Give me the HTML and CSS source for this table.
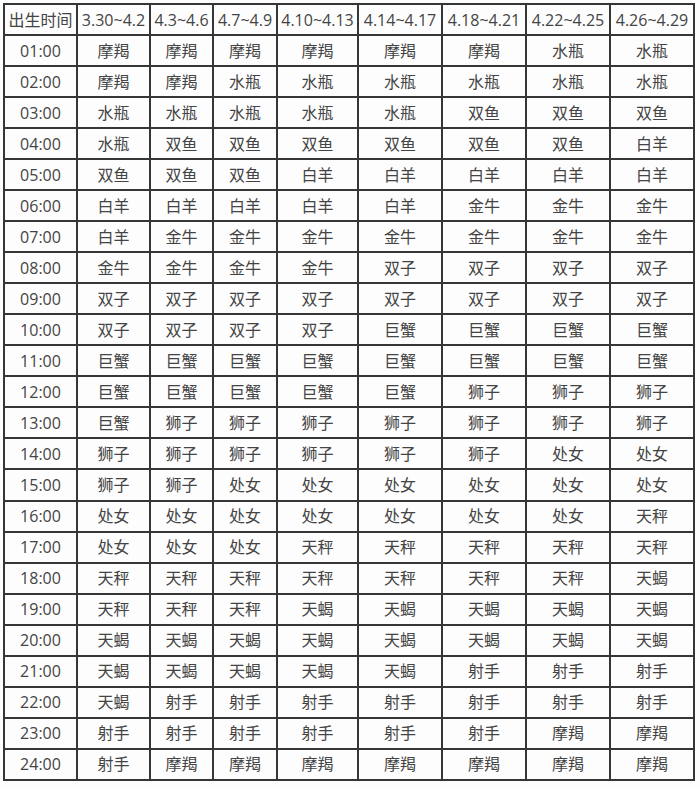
FILE: index.html
```html
<!DOCTYPE html>
<html>
<head>
<meta charset="utf-8">
<link rel="stylesheet" href="styles.css">
</head>
<body>
<table class="chart">
<colgroup>
<col class="c1"><col class="c2"><col class="c3"><col class="c4"><col class="c5"><col class="c6"><col class="c7"><col class="c8"><col class="c9">
</colgroup>
<tr><td>出生时间</td><td>3.30~4.2</td><td>4.3~4.6</td><td>4.7~4.9</td><td>4.10~4.13</td><td>4.14~4.17</td><td>4.18~4.21</td><td>4.22~4.25</td><td>4.26~4.29</td></tr>
<tr><td>01:00</td><td>摩羯</td><td>摩羯</td><td>摩羯</td><td>摩羯</td><td>摩羯</td><td>摩羯</td><td>水瓶</td><td>水瓶</td></tr>
<tr><td>02:00</td><td>摩羯</td><td>摩羯</td><td>水瓶</td><td>水瓶</td><td>水瓶</td><td>水瓶</td><td>水瓶</td><td>水瓶</td></tr>
<tr><td>03:00</td><td>水瓶</td><td>水瓶</td><td>水瓶</td><td>水瓶</td><td>水瓶</td><td>双鱼</td><td>双鱼</td><td>双鱼</td></tr>
<tr><td>04:00</td><td>水瓶</td><td>双鱼</td><td>双鱼</td><td>双鱼</td><td>双鱼</td><td>双鱼</td><td>双鱼</td><td>白羊</td></tr>
<tr><td>05:00</td><td>双鱼</td><td>双鱼</td><td>双鱼</td><td>白羊</td><td>白羊</td><td>白羊</td><td>白羊</td><td>白羊</td></tr>
<tr><td>06:00</td><td>白羊</td><td>白羊</td><td>白羊</td><td>白羊</td><td>白羊</td><td>金牛</td><td>金牛</td><td>金牛</td></tr>
<tr><td>07:00</td><td>白羊</td><td>金牛</td><td>金牛</td><td>金牛</td><td>金牛</td><td>金牛</td><td>金牛</td><td>金牛</td></tr>
<tr><td>08:00</td><td>金牛</td><td>金牛</td><td>金牛</td><td>金牛</td><td>双子</td><td>双子</td><td>双子</td><td>双子</td></tr>
<tr><td>09:00</td><td>双子</td><td>双子</td><td>双子</td><td>双子</td><td>双子</td><td>双子</td><td>双子</td><td>双子</td></tr>
<tr><td>10:00</td><td>双子</td><td>双子</td><td>双子</td><td>双子</td><td>巨蟹</td><td>巨蟹</td><td>巨蟹</td><td>巨蟹</td></tr>
<tr><td>11:00</td><td>巨蟹</td><td>巨蟹</td><td>巨蟹</td><td>巨蟹</td><td>巨蟹</td><td>巨蟹</td><td>巨蟹</td><td>巨蟹</td></tr>
<tr><td>12:00</td><td>巨蟹</td><td>巨蟹</td><td>巨蟹</td><td>巨蟹</td><td>巨蟹</td><td>狮子</td><td>狮子</td><td>狮子</td></tr>
<tr><td>13:00</td><td>巨蟹</td><td>狮子</td><td>狮子</td><td>狮子</td><td>狮子</td><td>狮子</td><td>狮子</td><td>狮子</td></tr>
<tr><td>14:00</td><td>狮子</td><td>狮子</td><td>狮子</td><td>狮子</td><td>狮子</td><td>狮子</td><td>处女</td><td>处女</td></tr>
<tr><td>15:00</td><td>狮子</td><td>狮子</td><td>处女</td><td>处女</td><td>处女</td><td>处女</td><td>处女</td><td>处女</td></tr>
<tr><td>16:00</td><td>处女</td><td>处女</td><td>处女</td><td>处女</td><td>处女</td><td>处女</td><td>处女</td><td>天秤</td></tr>
<tr><td>17:00</td><td>处女</td><td>处女</td><td>处女</td><td>天秤</td><td>天秤</td><td>天秤</td><td>天秤</td><td>天秤</td></tr>
<tr><td>18:00</td><td>天秤</td><td>天秤</td><td>天秤</td><td>天秤</td><td>天秤</td><td>天秤</td><td>天秤</td><td>天蝎</td></tr>
<tr><td>19:00</td><td>天秤</td><td>天秤</td><td>天秤</td><td>天蝎</td><td>天蝎</td><td>天蝎</td><td>天蝎</td><td>天蝎</td></tr>
<tr><td>20:00</td><td>天蝎</td><td>天蝎</td><td>天蝎</td><td>天蝎</td><td>天蝎</td><td>天蝎</td><td>天蝎</td><td>天蝎</td></tr>
<tr><td>21:00</td><td>天蝎</td><td>天蝎</td><td>天蝎</td><td>天蝎</td><td>天蝎</td><td>射手</td><td>射手</td><td>射手</td></tr>
<tr><td>22:00</td><td>天蝎</td><td>射手</td><td>射手</td><td>射手</td><td>射手</td><td>射手</td><td>射手</td><td>射手</td></tr>
<tr><td>23:00</td><td>射手</td><td>射手</td><td>射手</td><td>射手</td><td>射手</td><td>射手</td><td>摩羯</td><td>摩羯</td></tr>
<tr><td>24:00</td><td>射手</td><td>摩羯</td><td>摩羯</td><td>摩羯</td><td>摩羯</td><td>摩羯</td><td>摩羯</td><td>摩羯</td></tr>
</table>
</body>
</html>
```
FILE: styles.css
```css
html, body {
  margin: 0;
  padding: 0;
  background: #fdfdfd;
}
body {
  padding: 3px 0 0 3px;
}
.chart {
  border-collapse: collapse;
  table-layout: fixed;
  width: 691px;
  height: 778px;
  border: 2px solid #2e2e2e;
  font-family: "Open Sans", "Noto Sans CJK SC", sans-serif;
  font-size: 16px;
  color: #444;
}
.chart td {
  border: 2px solid #363636;
  text-align: center;
  vertical-align: middle;
  padding: 0;
  white-space: nowrap;
  overflow: hidden;
  line-height: 20px;
}
.c1 { width: 73px; }
.c2 { width: 73px; }
.c3 { width: 63px; }
.c4 { width: 64px; }
.c5 { width: 81px; }
.c6 { width: 84px; }
.c7 { width: 84px; }
.c8 { width: 84px; }
.c9 { width: 84px; }
```
